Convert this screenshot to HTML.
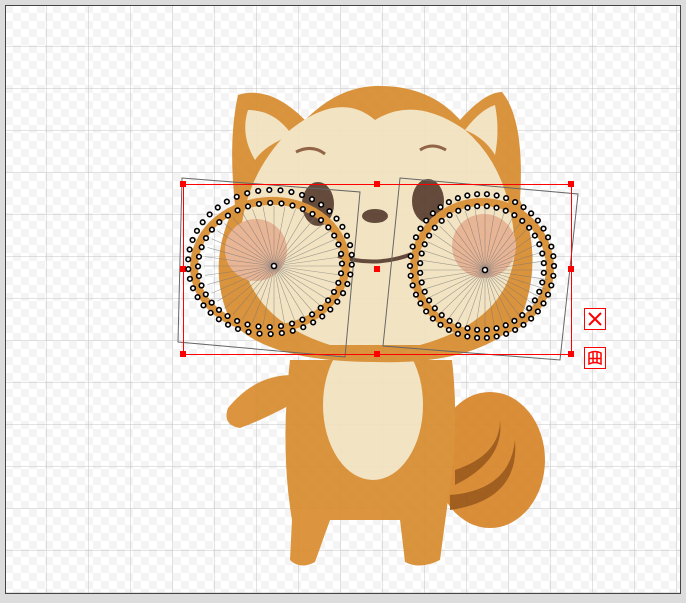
<!DOCTYPE html>
<html><head><meta charset="utf-8"><style>
html,body{margin:0;padding:0;width:686px;height:603px;overflow:hidden;background:#dcdcdc;font-family:"Liberation Sans",sans-serif}
svg{display:block}
</style></head><body>
<svg id="s" width="686" height="603" viewBox="0 0 686 603" xmlns="http://www.w3.org/2000/svg">
<defs>
<pattern id="chk" width="16" height="16" patternUnits="userSpaceOnUse" x="5" y="5">
<rect width="16" height="16" fill="#fff"/><rect width="8" height="8" fill="#f4f4f4"/><rect x="8" y="8" width="8" height="8" fill="#f4f4f4"/>
</pattern>
<pattern id="grid" width="42" height="42" patternUnits="userSpaceOnUse" x="5" y="5">
<path d="M42 0V42M0 42H42" stroke="#c4c4c4" stroke-width="1" fill="none"/>
</pattern>
</defs>
<rect x="0" y="0" width="686" height="603" fill="#dcdcdc"/>
<rect x="5.5" y="5.5" width="675" height="588" fill="url(#chk)" stroke="#444" stroke-width="1"/>
<rect x="6" y="6" width="674" height="587" fill="url(#grid)"/>
<g opacity="0.93">
<!-- tail -->
<ellipse cx="490" cy="460" rx="55" ry="68" fill="#d8862a"/>
<path d="M455 470 Q500 455 500 420 Q505 460 455 485Z" fill="#9a5410"/>
<path d="M450 495 Q510 490 515 440 Q520 500 450 510Z" fill="#9a5410"/>
<!-- body -->
<path d="M290 360 Q280 450 292 520 L290 560 Q300 570 315 562 L330 520 L400 520 L405 562 Q420 570 440 560 L448 500 Q460 430 452 360Z" fill="#d98c30"/>
<ellipse cx="373" cy="405" rx="50" ry="75" fill="#f2e2bf"/>
<path d="M292 375 Q255 375 228 408 Q222 425 240 428 Q262 420 290 405Z" fill="#d98c30"/>
<!-- head -->
<path d="M238 95 Q270 85 305 120 Q340 85 380 86 Q430 86 460 120 Q485 92 502 92 Q525 120 520 200 Q545 260 520 320 Q480 365 375 362 Q265 362 230 320 Q205 265 235 205 Q228 140 238 95Z" fill="#d98c30"/>
<path d="M248 110 Q275 110 292 135 Q265 145 255 160 Q240 135 248 110Z" fill="#f2e2bf"/>
<path d="M495 105 Q500 130 495 155 Q485 138 465 130 Q480 110 495 105Z" fill="#f2e2bf"/>
<path d="M375 120 Q340 90 290 130 Q240 180 240 250 Q250 320 330 345 L420 345 Q510 320 515 250 Q512 170 465 130 Q415 95 375 120Z" fill="#f2e2bf"/>
<ellipse cx="318" cy="204" rx="16" ry="22" fill="#5a3e2e"/>
<ellipse cx="428" cy="201" rx="16" ry="22" fill="#5a3e2e"/>
<ellipse cx="375" cy="216" rx="13" ry="7" fill="#5a3e2e"/>
<path d="M338 256 Q375 268 412 254" stroke="#5a3e2e" stroke-width="4" fill="none"/>
<path d="M296 152 Q312 144 325 154" stroke="#8a5a3a" stroke-width="3" fill="none"/>
<path d="M420 150 Q432 142 446 150" stroke="#8a5a3a" stroke-width="3" fill="none"/>
<circle cx="256" cy="250" r="31" fill="#e7b08e"/>
<circle cx="484" cy="246" r="32" fill="#e7b08e"/>
<!-- orange rings -->
<ellipse cx="270" cy="265" rx="76" ry="64" fill="none" stroke="#d98c30" stroke-width="8" transform="rotate(-5 270 265)"/>
<ellipse cx="482" cy="268" rx="68" ry="66" fill="none" stroke="#d98c30" stroke-width="8"/>
</g>
<!-- gray quads -->
<polygon points="182,178 360,192 345,357 178,342" fill="none" stroke="#666" stroke-width="1"/>
<polygon points="400,178 578,194 560,360 383,346" fill="none" stroke="#666" stroke-width="1"/>
<g id="lines" stroke="#777" stroke-width="0.6" opacity="0.7"></g>
<!-- red selection -->
<rect x="183.5" y="184.5" width="388" height="170" fill="none" stroke="#f00" stroke-width="1"/>
<g fill="#f00">
<rect x="180" y="181" width="6" height="6"/><rect x="374" y="181" width="6" height="6"/><rect x="568" y="181" width="6" height="6"/>
<rect x="180" y="266" width="6" height="6"/><rect x="374" y="266" width="6" height="6"/><rect x="568" y="266" width="6" height="6"/>
<rect x="180" y="351" width="6" height="6"/><rect x="374" y="351" width="6" height="6"/><rect x="568" y="351" width="6" height="6"/>
</g>
<g id="dots" fill="#fff" stroke="#000" stroke-width="1.6"></g>
<circle cx="274" cy="266" r="2.5" fill="#fff" stroke="#000" stroke-width="1.6"/>
<circle cx="485" cy="270" r="2.5" fill="#fff" stroke="#000" stroke-width="1.6"/>
<!-- buttons -->
<rect x="584.5" y="308.5" width="21" height="21" fill="#fff" stroke="#f00"/>
<path d="M589 313L601 325M601 313L589 325" stroke="#f00" stroke-width="2"/>
<rect x="584.5" y="347.5" width="21" height="21" fill="#fff" stroke="#f00"/>
<path d="M589 353Q595 350 601 353L601 364Q595 361 589 364Z M589 358.5H601 M593 352V363 M597 352V363" stroke="#f00" stroke-width="1.5" fill="none"/>
</svg>
<script>
var ns="http://www.w3.org/2000/svg",d=document.getElementById("dots"),l=document.getElementById("lines");
function ring(cx,cy,rx,ry,n,rot,off){for(var i=0;i<n;i++){var a=(i+off)/n*2*Math.PI,x=rx*Math.cos(a),y=ry*Math.sin(a),r=rot*Math.PI/180;var X=cx+x*Math.cos(r)-y*Math.sin(r),Y=cy+x*Math.sin(r)+y*Math.cos(r);var c=document.createElementNS(ns,"circle");c.setAttribute("cx",X);c.setAttribute("cy",Y);c.setAttribute("r",2.3);d.appendChild(c);}}
function spokes(cx,cy,rx,ry,n){for(var i=0;i<n;i++){var a=i/n*2*Math.PI;var p=document.createElementNS(ns,"line");p.setAttribute("x1",cx);p.setAttribute("y1",cy);p.setAttribute("x2",cx+rx*Math.cos(a));p.setAttribute("y2",cy+ry*Math.sin(a));l.appendChild(p);}}
spokes(274,266,70,60,40);spokes(485,270,64,62,40);
ring(270,262,82,72,46,-5,0);ring(270,265,72,62,40,-5,0.5);
ring(482,266,72,72,46,0,0);ring(482,268,62,62,40,0,0.5);
</script>
</body></html>
